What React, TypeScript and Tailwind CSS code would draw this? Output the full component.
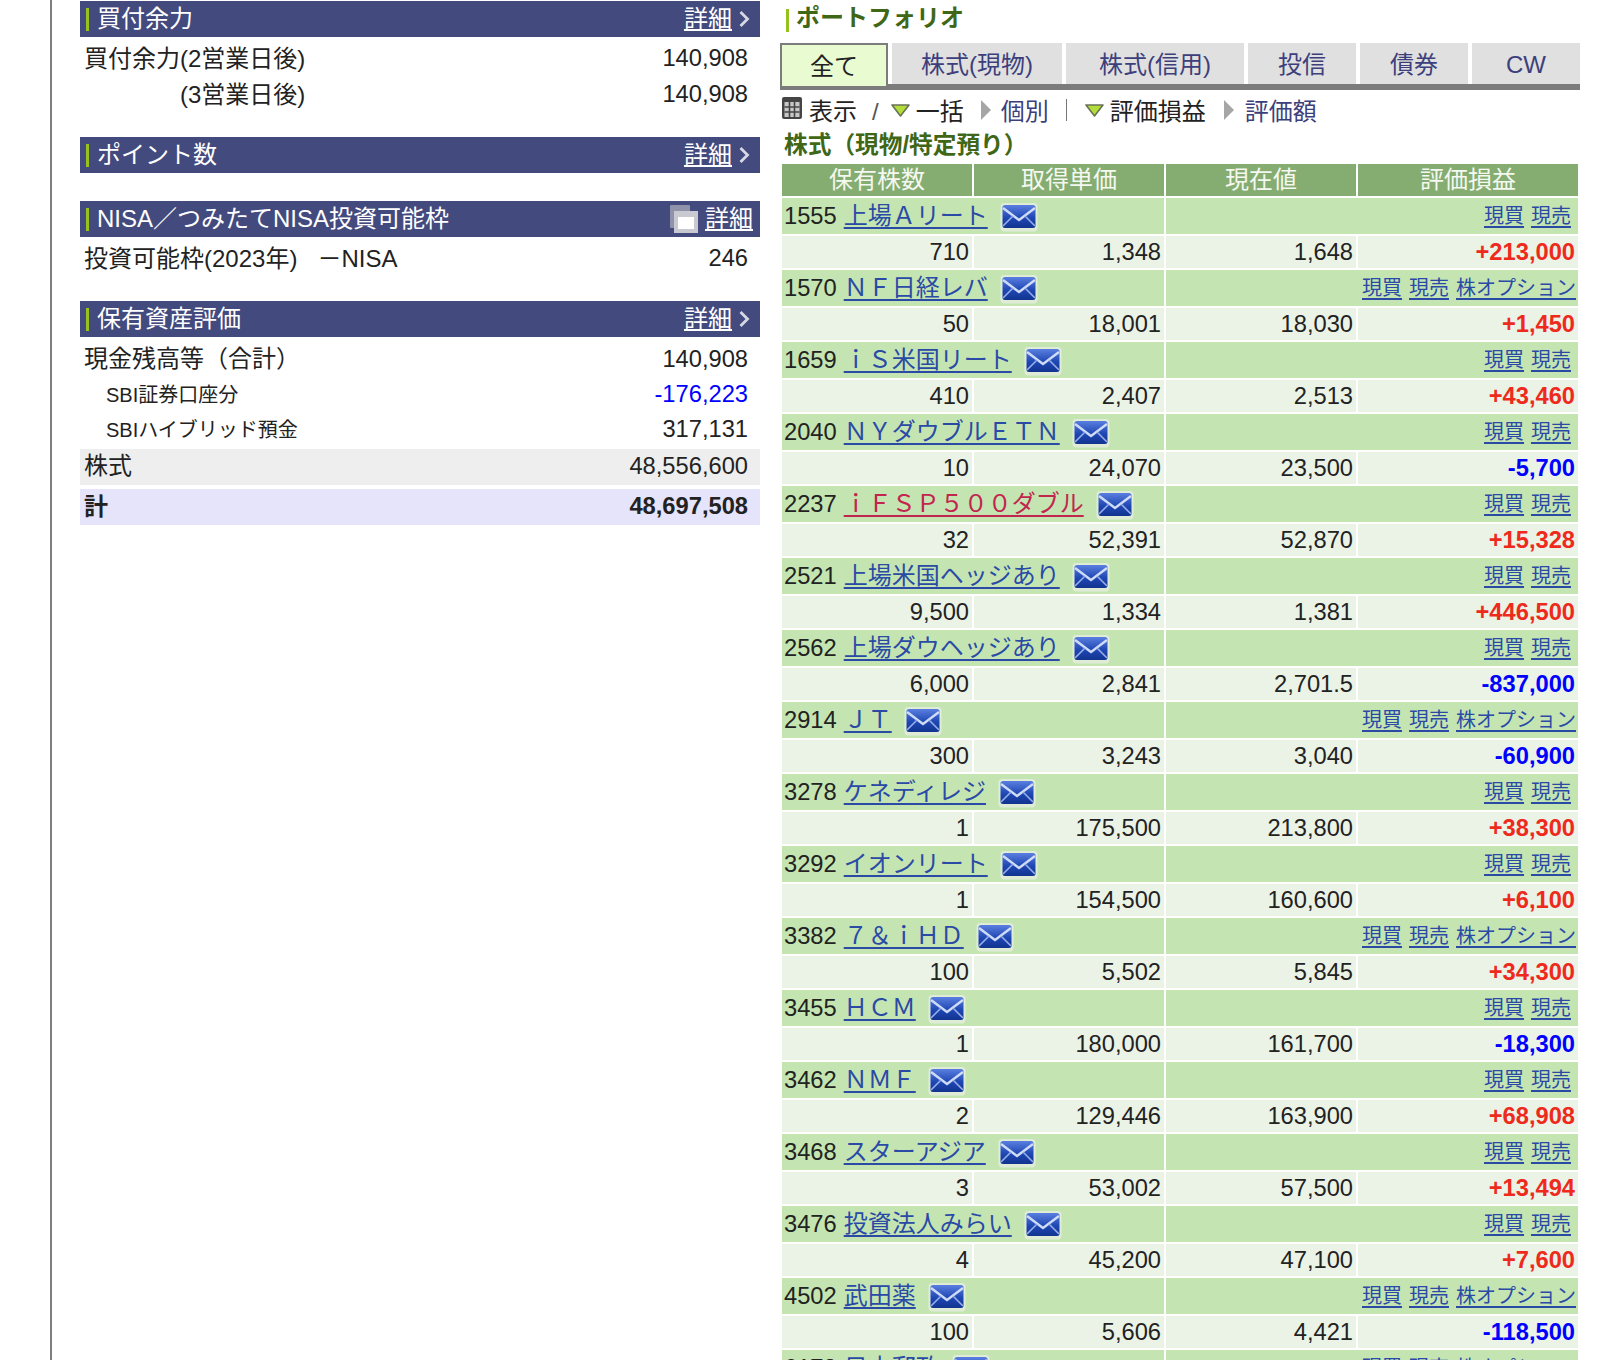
import React from "react";

const FONT = "[font-family:'Liberation_Sans','Noto_Sans_CJK_JP',sans-serif]";

function MailIcon() {
  return (
    <svg width="38" height="30" viewBox="0 0 38 30" className="shrink-0 blur-[0.4px]" aria-hidden="true">
      <defs>
        <linearGradient id="mailfill" x1="0" y1="0" x2="0" y2="1">
          <stop offset="0" stopColor="#5a7fe0" />
          <stop offset="0.55" stopColor="#2048b4" />
          <stop offset="1" stopColor="#123490" />
        </linearGradient>
      </defs>
      <rect x="0.5" y="1" width="37" height="28.5" rx="4" fill="#e8efe6" opacity="0.75" />
      <rect x="2.5" y="3" width="33" height="23" rx="2.5" fill="url(#mailfill)" />
      <path d="M3 6 L19 18 L35 6" fill="none" stroke="#cfdcf7" strokeWidth="2.4" />
      <path d="M3 24 L13 14 M35 24 L25 14" fill="none" stroke="#94aeea" strokeWidth="1.6" />
    </svg>
  );
}

function Chevron() {
  return (
    <svg width="12" height="18" viewBox="0 0 12 18" className="shrink-0" aria-hidden="true">
      <path d="M2.5 2 L9.5 9 L2.5 16" fill="none" stroke="#d8d8e4" strokeWidth="2.8" />
    </svg>
  );
}

function CopyIcon() {
  return (
    <svg width="28" height="28" viewBox="0 0 28 28" className="shrink-0 blur-[0.4px]" aria-hidden="true">
      <rect x="0" y="0" width="20" height="23" rx="1" fill="#8f92a8" />
      <rect x="4" y="6" width="24" height="22" fill="#c9c9d2" />
      <rect x="8" y="12" width="16" height="12" fill="#ffffff" />
    </svg>
  );
}

function TableIcon() {
  return (
    <svg width="20" height="22" viewBox="0 0 20 22" className="shrink-0" aria-hidden="true">
      <rect x="0" y="0" width="20" height="22" rx="2" fill="#454545" />
      <rect x="2.5" y="5" width="15" height="15" fill="#c8c8c8" />
      <path d="M2.5 10 H17.5 M2.5 15 H17.5 M7.5 5 V20 M12.5 5 V20" stroke="#454545" strokeWidth="1.6" />
    </svg>
  );
}

function TriDown() {
  return (
    <svg width="19" height="13" viewBox="0 0 19 13" className="shrink-0" aria-hidden="true">
      <path d="M1 1 H18 L9.5 12 Z" fill="#b2de3a" stroke="#6a7258" strokeWidth="1.6" strokeLinejoin="round" />
    </svg>
  );
}

function TriRight() {
  return (
    <svg width="12" height="22" viewBox="0 0 12 22" className="shrink-0" aria-hidden="true">
      <path d="M1 1 L11 11 L1 21 Z" fill="#a6a6a6" />
    </svg>
  );
}

function SectionHead({ title, mt, nisa }: { title: string; mt: string; nisa?: boolean }) {
  return (
    <div className={`${mt} flex h-[36px] items-center justify-between bg-[#434a7e] pl-[6px] text-white`}>
      <div className="flex items-center gap-[8px]">
        <span className="h-[23px] w-[3px] bg-[#96c11f]" />
        <span className="pb-px leading-none">{title}</span>
      </div>
      {nisa ? (
        <div className="flex items-center gap-[7px] pr-[7px]">
          <CopyIcon />
          <span className="leading-none underline underline-offset-2">詳細</span>
        </div>
      ) : (
        <div className="flex items-center gap-[6px] pr-[10px]">
          <span className="leading-none underline underline-offset-2">詳細</span>
          <Chevron />
        </div>
      )}
    </div>
  );
}

function Row({ label, value, cls = "", labelCls = "", valueCls = "", h = "h-[36px]" }: { label: string; value: string; cls?: string; labelCls?: string; valueCls?: string; h?: string }) {
  return (
    <div className={`flex ${h} items-center justify-between pl-[4px] pr-[12px] ${cls}`}>
      <span className={`whitespace-pre leading-none ${labelCls}`}>{label}</span>
      <span className={`text-[23.7px] leading-none ${valueCls}`}>{value}</span>
    </div>
  );
}

type Stock = {
  code: string;
  name: string;
  qty: string;
  cost: string;
  price: string;
  pl: string;
  opt?: boolean;
  pink?: boolean;
};

const stocks: Stock[] = [
  { code: "1555", name: "上場Ａリート", qty: "710", cost: "1,348", price: "1,648", pl: "+213,000" },
  { code: "1570", name: "ＮＦ日経レバ", qty: "50", cost: "18,001", price: "18,030", pl: "+1,450", opt: true },
  { code: "1659", name: "ｉＳ米国リート", qty: "410", cost: "2,407", price: "2,513", pl: "+43,460" },
  { code: "2040", name: "ＮＹダウブルＥＴＮ", qty: "10", cost: "24,070", price: "23,500", pl: "-5,700" },
  { code: "2237", name: "ｉＦＳＰ５００ダブル", qty: "32", cost: "52,391", price: "52,870", pl: "+15,328", pink: true },
  { code: "2521", name: "上場米国ヘッジあり", qty: "9,500", cost: "1,334", price: "1,381", pl: "+446,500" },
  { code: "2562", name: "上場ダウヘッジあり", qty: "6,000", cost: "2,841", price: "2,701.5", pl: "-837,000" },
  { code: "2914", name: "ＪＴ", qty: "300", cost: "3,243", price: "3,040", pl: "-60,900", opt: true },
  { code: "3278", name: "ケネディレジ", qty: "1", cost: "175,500", price: "213,800", pl: "+38,300" },
  { code: "3292", name: "イオンリート", qty: "1", cost: "154,500", price: "160,600", pl: "+6,100" },
  { code: "3382", name: "７＆ｉＨＤ", qty: "100", cost: "5,502", price: "5,845", pl: "+34,300", opt: true },
  { code: "3455", name: "ＨＣＭ", qty: "1", cost: "180,000", price: "161,700", pl: "-18,300" },
  { code: "3462", name: "ＮＭＦ", qty: "2", cost: "129,446", price: "163,900", pl: "+68,908" },
  { code: "3468", name: "スターアジア", qty: "3", cost: "53,002", price: "57,500", pl: "+13,494" },
  { code: "3476", name: "投資法人みらい", qty: "4", cost: "45,200", price: "47,100", pl: "+7,600" },
  { code: "4502", name: "武田薬", qty: "100", cost: "5,606", price: "4,421", pl: "-118,500", opt: true },
];

function NameRow({ s }: { s: Pick<Stock, "code" | "name" | "opt" | "pink"> }) {
  return (
    <>
      <div className="col-span-2 flex h-[36px] items-center gap-[7px] bg-[#c4e5b1] pl-[2px] pt-px">
        <span className="text-[23.7px] leading-none">{s.code}</span>
        <a className={`pb-px leading-none underline underline-offset-[3px] ${s.pink ? "text-[#c2264e]" : "text-[#2a4aa6]"}`}>{s.name}</a>
        <span className="ml-[5px] flex"><MailIcon /></span>
      </div>
      <div className="col-span-2 flex h-[36px] items-center justify-end gap-[7px] bg-[#c4e5b1] pr-[2px] text-[20px] text-[#2a4aa6]">
        <a className="leading-none underline underline-offset-[3px]">現買</a>
        <a className={`leading-none underline underline-offset-[3px] ${s.opt ? "" : "mr-[5px]"}`}>現売</a>
        {s.opt ? <a className="leading-none underline underline-offset-[3px]">株オプション</a> : null}
      </div>
    </>
  );
}

function ValueCell({ children, cls = "" }: { children: React.ReactNode; cls?: string }) {
  return <div className={`flex h-[32px] items-center justify-end bg-[#ebf3e7] pr-[3px] pt-px text-[23.7px] leading-none ${cls}`}>{children}</div>;
}

function Tab({ label, w, active }: { label: string; w: string; active?: boolean }) {
  if (active) {
    return (
      <div className={`${w} z-10 flex h-[43px] items-center justify-center border-x-[2px] border-t-[2px] border-[#7c7c7c] bg-[#e9fbd0] pt-[2px] text-[#222]`}>
        {label}
      </div>
    );
  }
  return (
    <div className={`${w} flex h-[41px] items-center justify-center bg-[#e0e0e0] pt-[3px] text-[#3d3f7c]`}>
      {label}
    </div>
  );
}

export default function App() {
  return (
    <div className={`${FONT} flex h-[1360px] w-[1598px] overflow-hidden bg-white text-[24px] text-[#222] [text-spacing-trim:space-all]`}>
      <div className="h-full w-[52px] shrink-0 border-r-2 border-[#7f7f7f]" />
      <div className="ml-[28px] w-[680px] shrink-0 pt-px">
        <SectionHead title="買付余力" mt="" />
        <div className="pt-[4px]">
          <Row label="買付余力(2営業日後)" value="140,908" />
          <Row label="　　　　(3営業日後)" value="140,908" />
        </div>
        <SectionHead title="ポイント数" mt="mt-[24px]" />
        <SectionHead title="NISA／つみたてNISA投資可能枠" mt="mt-[28px]" nisa />
        <div className="pt-[4px]">
          <Row label="投資可能枠(2023年)   －NISA" value="246" />
        </div>
        <SectionHead title="保有資産評価" mt="mt-[24px]" />
        <div className="pt-[5px]">
          <Row label="現金残高等（合計）" value="140,908" h="h-[35px]" labelCls="pb-[2px]" />
          <Row label="SBI証券口座分" value="-176,223" h="h-[35px]" cls="pl-[26px]" labelCls="text-[20px]" valueCls="text-[#0000ff]" />
          <Row label="SBIハイブリッド預金" value="317,131" h="h-[35px]" cls="pl-[26px]" labelCls="text-[20px]" />
        </div>
        <Row label="株式" value="48,556,600" cls="mt-[1.5px] bg-[#eeeeee]" labelCls="pb-[2px]" />
        <Row label="計" value="48,697,508" cls="mt-[4px] bg-[#e6e4fb] pt-px font-bold" />
      </div>

      <div className="ml-[20px] w-[800px] shrink-0">
        <div className="flex h-[43px] items-start gap-[7px] pt-[9px] pl-[6px] font-bold text-[#3f6716]">
          <span className="h-[23px] w-[3px] bg-[#96c11f]" />
          <span className="leading-[17px]">ポートフォリオ</span>
        </div>
        <div className="flex h-[43px] items-start gap-[4px]">
          <Tab label="全て" w="w-[108px]" active />
          <Tab label="株式(現物)" w="w-[170px]" />
          <Tab label="株式(信用)" w="w-[178px]" />
          <Tab label="投信" w="w-[108px]" />
          <Tab label="債券" w="w-[108px]" />
          <Tab label="CW" w="w-[108px]" />
        </div>
        <div className="mt-[-2px] h-[6px] bg-[#7c7c7c]" />
        <div className="flex h-[40px] items-center pl-[2px]">
          <span className="mb-[4px] flex"><TableIcon /></span>
          <span className="ml-[7px] pt-[4px] leading-none">表示</span>
          <span className="ml-[15px] pt-[4px] leading-none text-[#555]">/</span>
          <span className="ml-[12px] flex"><TriDown /></span>
          <span className="ml-[6px] pt-[4px] leading-none">一括</span>
          <span className="ml-[16px] flex"><TriRight /></span>
          <span className="ml-[9px] pt-[4px] leading-none text-[#3d3f7c]">個別</span>
          <span className="ml-[17px] h-[22px] w-[1px] bg-[#777]" />
          <span className="ml-[18px] flex"><TriDown /></span>
          <span className="ml-[6px] pt-[4px] leading-none">評価損益</span>
          <span className="ml-[17px] flex"><TriRight /></span>
          <span className="ml-[10px] pt-[4px] leading-none text-[#3d3f7c]">評価額</span>
        </div>
        <div className="flex h-[30px] items-center pl-[4px] pt-[1px] font-bold text-[#3f6716]">
          <span className="text-[23.7px] leading-none">株式（現物/特定預り）</span>
        </div>
        <div className="ml-[2px] mt-[4px] grid w-[796px] grid-cols-[190px_190px_190px_220px] gap-x-[2px] gap-y-[2px]">
          {["保有株数", "取得単価", "現在値", "評価損益"].map((h) => (
            <div key={h} className="flex h-[32px] items-center justify-center bg-[#86ad71] pb-px leading-none text-[#f4f8f0]">
              {h}
            </div>
          ))}
          {stocks.map((s) => (
            <React.Fragment key={s.code}>
              <NameRow s={s} />
              <ValueCell>{s.qty}</ValueCell>
              <ValueCell>{s.cost}</ValueCell>
              <ValueCell>{s.price}</ValueCell>
              <ValueCell cls={`font-bold ${s.pl.startsWith("+") ? "text-[#ee2a1c]" : "text-[#0000ff]"}`}>{s.pl}</ValueCell>
            </React.Fragment>
          ))}
          <NameRow s={{ code: "6178", name: "日本郵政", opt: true }} />
        </div>
      </div>
    </div>
  );
}
